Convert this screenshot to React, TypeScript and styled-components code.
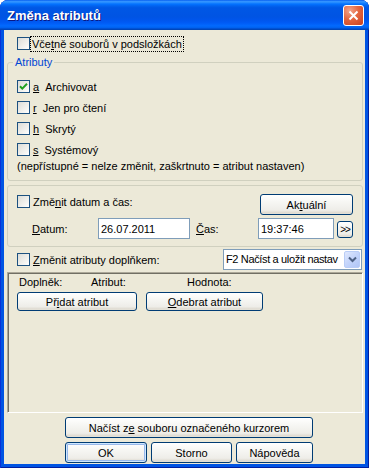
import React from "react";
import styled, { createGlobalStyle } from "styled-components";

const GlobalStyle = createGlobalStyle`
  html, body { margin: 0; padding: 0; background: #ffffff; }
  body { font-family: "Liberation Sans", Arial, sans-serif; font-size: 11px; color: #000; }
  * { box-sizing: border-box; }
`;

const FONT = `"Liberation Sans", Arial, sans-serif`;

const Window = styled.div`
  width: 369px;
  height: 468px;
  display: flex;
  flex-direction: column;
  background: #0054e3;
  border-radius: 8px 8px 0 0;
  overflow: hidden;
  box-shadow: inset 1px 0 #0831d9, inset -1px 0 #001ea0, inset 0 -1px #001ea0;
`;

const TitleBar = styled.div`
  height: 30px;
  flex: none;
  display: flex;
  align-items: center;
  justify-content: space-between;
  padding: 1px 5px 0 7px;
  background: linear-gradient(
    180deg,
    #0058ee 0%,
    #3593ff 4%,
    #288eff 8%,
    #127dff 11%,
    #036ffc 15%,
    #0262ee 20%,
    #0057e5 26%,
    #0054e3 56%,
    #0055eb 66%,
    #005bf5 76%,
    #026afe 86%,
    #0062ef 92%,
    #0052d6 95%,
    #0040ab 100%
  );
`;

const Title = styled.span`
  color: #ffffff;
  font: bold 13px ${FONT};
  text-shadow: 1px 1px #0a1883;
`;

const CloseButton = styled.div`
  width: 21px;
  height: 21px;
  border: 1px solid #ffffff;
  border-radius: 3px;
  background: radial-gradient(circle at 30% 25%, #f2a48b 0%, #e4663f 45%, #c8401f 100%);
  display: flex;
  align-items: center;
  justify-content: center;
`;

const Body = styled.div`
  flex: 1;
  margin: 0 4px 4px;
  background: #ece9d8;
  display: flex;
  flex-direction: column;
  padding-top: 6px;
`;

const CheckRow = styled.label<{ $indent?: number; $gap?: number }>`
  display: flex;
  align-items: center;
  height: 15px;
  gap: ${(p) => p.$gap ?? 3}px;
  margin-left: ${(p) => p.$indent ?? 0}px;
  white-space: nowrap;
`;

const Box = styled.span`
  width: 13px;
  height: 13px;
  flex: none;
  border: 1px solid #1c5180;
  background: linear-gradient(135deg, #dcdcd7 0%, #f2f2ef 65%, #ffffff 100%);
  display: flex;
  align-items: center;
  justify-content: center;
`;

const FocusText = styled.span`
  outline: 1px dotted #000;
  padding: 0 1px;
  line-height: 14px;
`;

const GroupBox = styled.fieldset`
  margin: 5px 2px 0 3px;
  padding: 11px 0 7px 0;
  border: 1px solid #d0d0bf;
  border-radius: 3px;
  min-width: 0;
`;

const Legend = styled.legend`
  margin-left: 5px;
  padding: 0 2px;
  color: #0046d5;
  line-height: 13px;
`;

const AttrList = styled.div`
  display: flex;
  flex-direction: column;
  gap: 8px;
  padding-left: 9px;
`;

const AttrRow = styled.label`
  display: flex;
  align-items: center;
  height: 13px;
  gap: 3px;
`;

const AttrName = styled.span`
  margin-left: 6px;
`;

const Note = styled.div`
  margin-top: 4px;
  padding-left: 9px;
  line-height: 13px;
  white-space: nowrap;
`;

const Frame = styled.div`
  margin: 4px 2px 0 3px;
  padding: 8px 9px 7px 9px;
  border: 1px solid #d0d0bf;
  border-radius: 3px;
  display: flex;
  flex-direction: column;
  gap: 3px;
`;

const FrameTop = styled.div`
  display: flex;
  align-items: flex-start;
  justify-content: space-between;
  height: 21px;
`;

const FieldRow = styled.div`
  display: flex;
  align-items: center;
  height: 21px;
  padding-left: 15px;
`;

const FieldLabel = styled.span<{ $w: number; $ml?: number }>`
  width: ${(p) => p.$w}px;
  margin-left: ${(p) => p.$ml ?? 0}px;
  flex: none;
`;

const TextInput = styled.div<{ $w: number }>`
  width: ${(p) => p.$w}px;
  height: 21px;
  flex: none;
  border: 1px solid #7f9db9;
  background: #ffffff;
  padding-left: 2px;
  display: flex;
  align-items: center;
`;

const Button = styled.button<{ $w: number; $h?: number; $default?: boolean }>`
  width: ${(p) => p.$w}px;
  height: ${(p) => p.$h ?? 21}px;
  flex: none;
  padding: 0;
  font: 11px ${FONT};
  color: #000;
  border: 1px solid #003c74;
  border-radius: 3px;
  background: linear-gradient(180deg, #ffffff 0%, #f7f7f4 35%, #eeede8 80%, #d8d2c6 100%);
  box-shadow: ${(p) =>
    p.$default ? "inset 0 0 0 1px #cee7ff, inset 0 0 0 2px #98b8ea" : "inset 0 -1px 0 #e3e0d6"};
  display: flex;
  align-items: center;
  justify-content: center;
  white-space: nowrap;
`;

const SmallButton = styled(Button)`
  align-self: flex-end;
  margin-left: 3px;
  margin-bottom: 1px;
  font-size: 10px;
  letter-spacing: -1px;
`;

const PluginRow = styled.div`
  margin-top: 2px;
  height: 21px;
  display: flex;
  align-items: center;
  justify-content: space-between;
  padding: 0 3px 0 13px;
`;

const Combo = styled.div`
  width: 139px;
  height: 21px;
  border: 1px solid #7f9db9;
  background: #ffffff;
  display: flex;
  align-items: stretch;
`;

const ComboText = styled.span`
  flex: 1;
  overflow: hidden;
  white-space: nowrap;
  padding-left: 2px;
  line-height: 19px;
  letter-spacing: -0.35px;
`;

const ComboArrow = styled.span`
  width: 16px;
  flex: none;
  margin: 1px;
  border: 1px solid #b9cdf7;
  border-radius: 2px;
  background: linear-gradient(135deg, #dfe8fe 0%, #c3d4fb 50%, #b0c6f7 100%);
  display: flex;
  align-items: center;
  justify-content: center;
`;

const Panel = styled.div`
  margin: 2px 2px 0 3px;
  height: 141px;
  flex: none;
  border: 1px solid;
  border-color: #aca899 #ffffff #ffffff #aca899;
  box-shadow: inset 1px 1px #716f64;
  padding: 3px 0 0 9px;
  display: flex;
  flex-direction: column;
  gap: 3px;
`;

const PanelHeader = styled.div`
  display: grid;
  grid-template-columns: 72px 96px auto;
  padding-left: 2px;
  line-height: 13px;
`;

const PanelButtons = styled.div`
  display: flex;
  gap: 9px;
`;

const Footer = styled.div`
  margin: 4px 0 0 61px;
  display: flex;
  flex-direction: column;
  gap: 4px;
`;

const FooterRow = styled.div`
  display: flex;
  gap: 4px;
`;

const Check = () => (
  <svg width="9" height="9" viewBox="0 0 9 9">
    <path d="M1 4.2 L3.3 6.6 L8 1.8" fill="none" stroke="#21a121" strokeWidth="2" />
  </svg>
);

const CheckBox: React.FC<{ checked?: boolean }> = ({ checked }) => (
  <Box>{checked ? <Check /> : null}</Box>
);

export default function App() {
  return (
    <>
      <GlobalStyle />
      <Window>
        <TitleBar>
          <Title>Změna atributů</Title>
          <CloseButton>
            <svg width="11" height="11" viewBox="0 0 11 11">
              <path d="M1.5 1.5 L9.5 9.5 M9.5 1.5 L1.5 9.5" stroke="#ffffff" strokeWidth="2" />
            </svg>
          </CloseButton>
        </TitleBar>
        <Body>
          <CheckRow $indent={13} $gap={1}>
            <CheckBox />
            <FocusText>
              Vče<u>t</u>ně souborů v podsložkách
            </FocusText>
          </CheckRow>

          <GroupBox>
            <Legend>Atributy</Legend>
            <AttrList>
              <AttrRow>
                <CheckBox checked />
                <span>
                  <u>a</u>
                  <AttrName>Archivovat</AttrName>
                </span>
              </AttrRow>
              <AttrRow>
                <CheckBox />
                <span>
                  <u>r</u>
                  <AttrName>Jen pro čtení</AttrName>
                </span>
              </AttrRow>
              <AttrRow>
                <CheckBox />
                <span>
                  <u>h</u>
                  <AttrName>Skrytý</AttrName>
                </span>
              </AttrRow>
              <AttrRow>
                <CheckBox />
                <span>
                  <u>s</u>
                  <AttrName>Systémový</AttrName>
                </span>
              </AttrRow>
            </AttrList>
            <Note>(nepřístupné = nelze změnit, zaškrtnuto = atribut nastaven)</Note>
          </GroupBox>

          <Frame>
            <FrameTop>
              <CheckRow>
                <CheckBox />
                <span>
                  Změ<u>n</u>it datum a čas:
                </span>
              </CheckRow>
              <Button $w={93}>
                <span>
                  Ak<u>t</u>uální
                </span>
              </Button>
            </FrameTop>
            <FieldRow>
              <FieldLabel $w={66}>
                <u>D</u>atum:
              </FieldLabel>
              <TextInput $w={92}>26.07.2011</TextInput>
              <FieldLabel $w={62} $ml={6}>
                <u>Č</u>as:
              </FieldLabel>
              <TextInput $w={76}>19:37:46</TextInput>
              <SmallButton $w={16} $h={17}>
                &gt;&gt;
              </SmallButton>
            </FieldRow>
          </Frame>

          <PluginRow>
            <CheckRow>
              <CheckBox />
              <span>
                <u>Z</u>měnit atributy doplňkem:
              </span>
            </CheckRow>
            <Combo>
              <ComboText>F2 Načíst a uložit nastav</ComboText>
              <ComboArrow>
                <svg width="9" height="7" viewBox="0 0 9 7">
                  <path d="M1 1.5 L4.5 5 L8 1.5" fill="none" stroke="#4d6185" strokeWidth="2" />
                </svg>
              </ComboArrow>
            </Combo>
          </PluginRow>

          <Panel>
            <PanelHeader>
              <span>Doplněk:</span>
              <span>Atribut:</span>
              <span>Hodnota:</span>
            </PanelHeader>
            <PanelButtons>
              <Button $w={120} $h={19}>
                <span>
                  Př<u>i</u>dat atribut
                </span>
              </Button>
              <Button $w={117} $h={19}>
                <span>
                  <u>O</u>debrat atribut
                </span>
              </Button>
            </PanelButtons>
          </Panel>

          <Footer>
            <Button $w={248}>
              <span>
                Načíst z<u>e</u> souboru označeného kurzorem
              </span>
            </Button>
            <FooterRow>
              <Button $w={82} $default>
                OK
              </Button>
              <Button $w={81}>Storno</Button>
              <Button $w={77}>Nápověda</Button>
            </FooterRow>
          </Footer>
        </Body>
      </Window>
    </>
  );
}
